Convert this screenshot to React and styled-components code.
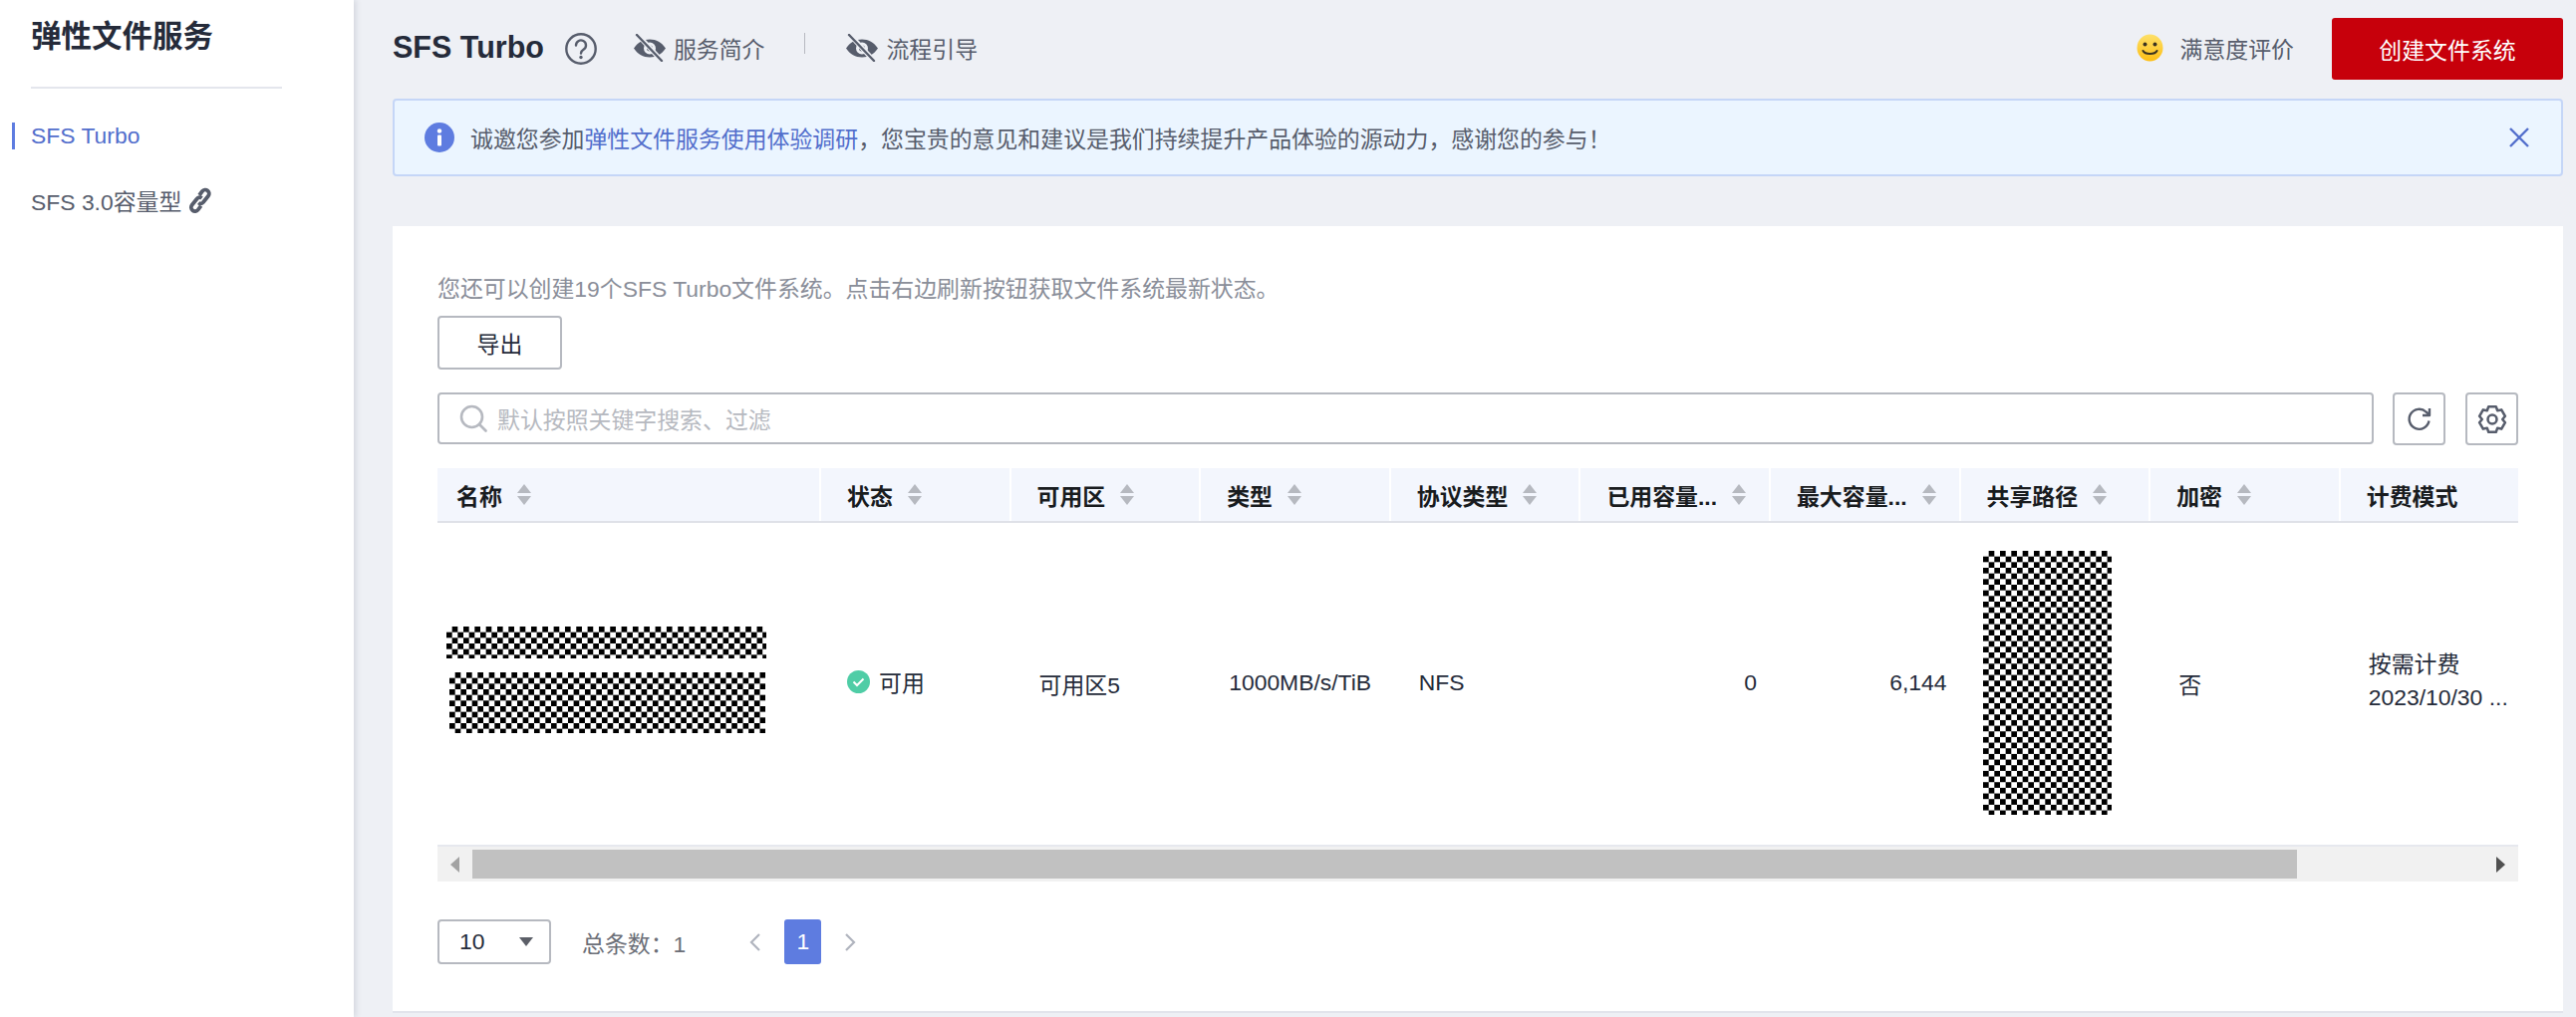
import styled, { createGlobalStyle } from "styled-components";

const GlobalStyle = createGlobalStyle`
  html, body {
    margin: 0;
    padding: 0;
    height: 100%;
    overflow: hidden;
  }
  body {
    font-family: "Liberation Sans", "Noto Sans CJK SC", sans-serif;
    font-size: 22.9px;
    color: #252b3a;
    background: #eef0f5;
  }
  * {
    box-sizing: border-box;
  }
`;

const COLUMNS = "385px repeat(8, 190.6px) 1fr";

const headers = [
  { label: "名称", pad: 19 },
  { label: "状态" },
  { label: "可用区" },
  { label: "类型" },
  { label: "协议类型" },
  { label: "已用容量..." },
  { label: "最大容量..." },
  { label: "共享路径" },
  { label: "加密" },
  { label: "计费模式", noSort: true },
];

const EyeOffIcon = () => (
  <svg width="32" height="28" viewBox="0 0 32 28">
    <path
      fill="#575d6c"
      fillRule="evenodd"
      d="M0 14.5C4 8.500 9.500 5.500 16 5.500s12 3 16 9C28 20.500 22.500 23.500 16 23.500S4 20.500 0 14.500zM16 8.500a6 6 0 1 0 0 12 6 6 0 0 0 0-12z"
    />
    <circle cx="16" cy="14.5" r="3" fill="#575d6c" />
    <path d="M4 1l23 25" stroke="#eef0f5" strokeWidth="5" />
    <path d="M3 1l25 26" stroke="#575d6c" strokeWidth="2.4" strokeLinecap="round" />
  </svg>
);

const HelpIcon = () => (
  <svg width="32" height="32" viewBox="0 0 32 32" fill="none" stroke="#575d6c">
    <circle cx="16" cy="16" r="14.7" strokeWidth="2.4" />
    <path d="M11 12.5a5 5 0 1 1 7.800 4.100c-1.800 1.200-2.800 2-2.800 4" strokeWidth="2.4" strokeLinecap="round" />
    <circle cx="16" cy="24.5" r="1.7" fill="#575d6c" stroke="none" />
  </svg>
);

const LinkIcon = () => (
  <svg width="24" height="26" viewBox="0 0 24 26" fill="none" stroke="#575d6c" strokeWidth="3.8">
    <path d="M11 8l3-4a3.800 3.800 0 0 1 6 4.800L15 15a3.300 3.300 0 0 1-4.800 .6" />
    <path d="M13.500 11a3.300 3.300 0 0 0-4.800 .5l-5 6.300a3.800 3.800 0 0 0 6 4.800l3-4" />
  </svg>
);

const Smiley = () => (
  <svg width="27" height="28" viewBox="0 0 27 28">
    <defs>
      <linearGradient id="smileyFill" x1="0" y1="0" x2="0" y2="1">
        <stop offset="0" stopColor="#fde06a" />
        <stop offset="1" stopColor="#fdbe14" />
      </linearGradient>
    </defs>
    <ellipse cx="13.5" cy="14" rx="13" ry="13.5" fill="url(#smileyFill)" />
    <circle cx="8.5" cy="10.5" r="2" fill="#3a3320" />
    <circle cx="18.5" cy="10.5" r="2" fill="#3a3320" />
    <path d="M6.500 17c2 4 12 4 14 0" fill="none" stroke="#3a3320" strokeWidth="2" strokeLinecap="round" />
  </svg>
);

const InfoIcon = () => (
  <svg width="30" height="30" viewBox="0 0 30 30">
    <circle cx="15" cy="15" r="15" fill="#5e7ce0" />
    <circle cx="15" cy="8.5" r="2.2" fill="#fff" />
    <rect x="13" y="12.5" width="4" height="11" rx="1" fill="#fff" />
  </svg>
);

const CloseIcon = () => (
  <svg width="20" height="20" viewBox="0 0 20 20" fill="none" stroke="#526ecc" strokeWidth="2.4">
    <path d="M1 1l18 18M19 1L1 19" />
  </svg>
);

const SearchIcon = () => (
  <svg width="28" height="28" viewBox="0 0 28 28" fill="none" stroke="#b6b9c0" strokeWidth="2.6">
    <circle cx="12.5" cy="12.5" r="10.5" />
    <path d="M20 20l6.500 6.500" strokeLinecap="round" />
  </svg>
);

const RefreshIcon = () => (
  <svg width="26" height="26" viewBox="0 0 26 26" fill="none" stroke="#575d6c" strokeWidth="2.4">
    <path d="M22.500 14.500A10 10 0 1 1 19.500 5.500L22.500 8" />
    <path d="M23 2v7h-7" strokeLinejoin="round" />
  </svg>
);

const GearIcon = () => (
  <svg width="32" height="32" viewBox="0 0 30 30" fill="none" stroke="#575d6c" strokeWidth="2.4" strokeLinejoin="round">
    <path d="M11.500 3h7l1.300 3.700 3.800-.7 3.500 6-2.500 3 2.500 3-3.500 6-3.800-.7-1.300 3.700h-7l-1.300-3.700-3.800 .7-3.500-6 2.500-3-2.500-3 3.500-6 3.800 .7z" />
    <circle cx="15" cy="15" r="4.2" />
  </svg>
);

const CheckIcon = () => (
  <svg width="23" height="23" viewBox="0 0 23 23">
    <circle cx="11.5" cy="11.5" r="11.5" fill="#4fcda6" />
    <path d="M6.500 11.500l3.500 3.500 6.500-6.500" fill="none" stroke="#fff" strokeWidth="2" />
  </svg>
);

const ChevronIcon = ({ flip }) => (
  <svg width="12" height="18" viewBox="0 0 12 18" fill="none" stroke="#b0b4be" strokeWidth="2.2">
    <path d={flip ? "M2 1l8 8-8 8" : "M10 1L2 9l8 8"} />
  </svg>
);

const Page = styled.div`
  display: flex;
  width: 2585px;
  height: 1021px;
  overflow: hidden;
`;

const Sidebar = styled.aside`
  width: 355px;
  flex: none;
  background: #fff;
  box-shadow: 2px 0 6px rgba(40, 50, 80, 0.14);
  position: relative;
`;

const SideTitle = styled.h1`
  margin: 0 72px 0 31px;
  height: 89px;
  padding-top: 16px;
  font-size: 30.5px;
  line-height: 40px;
  font-weight: 700;
  color: #252b3a;
  border-bottom: 2px solid #e4e6ed;
  white-space: nowrap;
`;

const SideNav = styled.nav`
  display: flex;
  flex-direction: column;
  gap: 37px;
  padding-top: 34px;
`;

const SideItem = styled.a`
  display: flex;
  align-items: center;
  gap: 7px;
  height: 27px;
  margin-left: 12px;
  padding-left: ${({ $active }) => ($active ? "16px" : "19px")};
  border-left: ${({ $active }) => ($active ? "3px solid #5e7ce0" : "none")};
  color: ${({ $active }) => ($active ? "#526ecc" : "#575d6c")};
  white-space: nowrap;
`;

const Main = styled.main`
  flex: 1;
  min-width: 0;
  display: flex;
  flex-direction: column;
  padding: 18px 13px 0 39px;
`;

const TopBar = styled.header`
  display: flex;
  align-items: center;
  height: 62px;
`;

const PageTitle = styled.h2`
  margin: -4px 21px 0 0;
  font-size: 30.5px;
  font-weight: 700;
  color: #252b3a;
  white-space: nowrap;
`;

const TopLink = styled.span`
  display: flex;
  align-items: center;
  gap: 8px;
  margin: -3px 0 0 ${({ $offset }) => $offset}px;
  color: #575d6c;
  white-space: nowrap;
`;

const TopDivider = styled.i`
  width: 1px;
  height: 21px;
  margin: -12px 0 0 40px;
  background: #b6b9c0;
`;

const TopRight = styled.div`
  margin-left: auto;
  display: flex;
  align-items: center;
`;

const Rating = styled.span`
  display: flex;
  align-items: center;
  gap: 17px;
  margin: -2px 38px 0 0;
  color: #575d6c;
  white-space: nowrap;
`;

const CreateButton = styled.button`
  width: 232px;
  height: 62px;
  border: none;
  border-radius: 3px;
  background: #c7000b;
  color: #fff;
  font: inherit;
`;

const Alert = styled.div`
  display: flex;
  align-items: center;
  height: 78px;
  margin-top: 19px;
  padding: 0 32px 0 30px;
  gap: 16px;
  background: #ebf5ff;
  border: 2px solid #c5d6f7;
  border-radius: 4px;
  color: #575d6c;
  white-space: nowrap;
`;

const AlertLink = styled.a`
  color: #526ecc;
`;

const AlertClose = styled.span`
  display: flex;
  margin-left: auto;
`;

const Card = styled.section`
  height: 788px;
  margin-top: 50px;
  padding: 48px 45px 0;
  background: #fff;
  box-shadow: 0 2px 0 #e2e4ec;
`;

const Note = styled.p`
  margin: 0;
  line-height: 30px;
  color: #8a8e99;
  white-space: nowrap;
`;

const OutlineButton = styled.button`
  display: block;
  width: 125px;
  height: 54px;
  margin-top: 12px;
  padding: 0;
  background: #fff;
  border: 2px solid #b6b9c0;
  border-radius: 4px;
  color: #252b3a;
  font: inherit;
`;

const SearchRow = styled.div`
  display: flex;
  margin-top: 23px;
  gap: 19px;
`;

const SearchBox = styled.div`
  flex: 1;
  display: flex;
  align-items: center;
  gap: 10px;
  height: 52px;
  padding-left: 20px;
  border: 2px solid #b6b9c0;
  border-radius: 4px;
  color: #b6b9c0;
`;

const ToolButtons = styled.div`
  display: flex;
  gap: 20px;
`;

const IconButton = styled.button`
  display: flex;
  align-items: center;
  justify-content: center;
  width: 53px;
  height: 53px;
  padding: 0;
  background: #fff;
  border: 2px solid #b6b9c0;
  border-radius: 4px;
`;

const HeadRow = styled.div`
  display: grid;
  grid-template-columns: ${COLUMNS};
  height: 55px;
  margin-top: 23px;
  background: #f3f6fd;
  border-bottom: 2px solid #dfe1e8;
`;

const HeadCell = styled.div`
  display: flex;
  align-items: center;
  min-width: 0;
  padding-left: ${({ $pad }) => $pad}px;
  border-right: 2px solid #fff;
  color: #191c1f;
  font-weight: 700;
  white-space: nowrap;
  &:last-child {
    border-right: none;
  }
`;

const SortMark = styled.span`
  display: flex;
  flex-direction: column;
  gap: 3px;
  margin-left: 15px;
  &::before,
  &::after {
    content: "";
    width: 0;
    height: 0;
    border-left: 7.5px solid transparent;
    border-right: 7.5px solid transparent;
  }
  &::before {
    border-bottom: 9px solid #b6b9c0;
  }
  &::after {
    border-top: 9px solid #b6b9c0;
  }
`;

const DataRow = styled.div`
  display: grid;
  grid-template-columns: ${COLUMNS};
  height: 325px;
  align-items: center;
  padding-bottom: 2px;
  border-bottom: 2px solid #e6e8ee;
`;

const Cell = styled.div`
  min-width: 0;
  padding: ${({ $right }) => ($right ? "0 14px 0 0" : "0 10px 0 28px")};
  text-align: ${({ $right }) => ($right ? "right" : "left")};
  white-space: nowrap;
`;

const NameCell = styled.div`
  display: flex;
  flex-direction: column;
  gap: 14px;
  padding-bottom: 6px;
`;

const Masked = styled.div`
  width: ${({ $w }) => $w}px;
  height: ${({ $h }) => $h}px;
  margin-left: ${({ $x }) => $x}px;
  background: repeating-conic-gradient(#000 0 25%, #fff 0 50%) 0 0 / 11.33px 11.33px;
`;

const StatusCell = styled.div`
  display: flex;
  align-items: center;
  gap: 9px;
  padding: 0 0 3px 26px;
`;

const BillingCell = styled.div`
  padding-left: 28px;
  line-height: 33px;
  padding-bottom: 4px;
  white-space: nowrap;
`;

const ScrollBar = styled.div`
  display: flex;
  align-items: center;
  height: 35px;
  padding: 3px 0;
  background: #f1f1f1;
`;

const ScrollArrow = styled.span`
  flex: none;
  display: flex;
  justify-content: center;
  width: 35px;
  ${({ $left }) => ($left ? "" : "margin-left: auto;")}
  &::before {
    content: "";
    border-top: 8px solid transparent;
    border-bottom: 8px solid transparent;
    ${({ $left }) =>
      $left ? "border-right: 9px solid #a3a3a3;" : "border-left: 9px solid #505050;"}
  }
`;

const ScrollThumb = styled.div`
  width: 1831px;
  height: 29px;
  background: #c1c1c1;
`;

const Pager = styled.div`
  display: flex;
  align-items: center;
  height: 45px;
  margin-top: 38px;
`;

const PageSize = styled.div`
  display: flex;
  align-items: center;
  justify-content: space-between;
  width: 114px;
  height: 45px;
  padding: 0 16px 0 20px;
  border: 2px solid #b6b9c0;
  border-radius: 4px;
  &::after {
    content: "";
    border-left: 7px solid transparent;
    border-right: 7px solid transparent;
    border-top: 9px solid #5c5f68;
  }
`;

const Total = styled.span`
  margin-left: 31px;
  color: #6c6f78;
  white-space: pre;
`;

const PagerNav = styled.span`
  display: flex;
  align-items: center;
  margin-left: 64px;
`;

const PageNumber = styled.span`
  display: flex;
  align-items: center;
  justify-content: center;
  width: 37px;
  height: 45px;
  margin: 0 23px;
  border-radius: 3px;
  background: #5e7ce0;
  color: #fff;
`;

export default function App() {
  return (
    <Page>
      <GlobalStyle />
      <Sidebar>
        <SideTitle>弹性文件服务</SideTitle>
        <SideNav>
          <SideItem $active>SFS Turbo</SideItem>
          <SideItem>
            SFS 3.0容量型
            <LinkIcon />
          </SideItem>
        </SideNav>
      </Sidebar>
      <Main>
        <TopBar>
          <PageTitle>SFS Turbo</PageTitle>
          <HelpIcon />
          <TopLink $offset={37}>
            <EyeOffIcon />
            服务简介
          </TopLink>
          <TopDivider />
          <TopLink $offset={41}>
            <EyeOffIcon />
            流程引导
          </TopLink>
          <TopRight>
            <Rating>
              <Smiley />
              满意度评价
            </Rating>
            <CreateButton>创建文件系统</CreateButton>
          </TopRight>
        </TopBar>
        <Alert>
          <InfoIcon />
          <span>
            诚邀您参加<AlertLink>弹性文件服务使用体验调研</AlertLink>，您宝贵的意见和建议是我们持续提升产品体验的源动力，感谢您的参与！
          </span>
          <AlertClose>
            <CloseIcon />
          </AlertClose>
        </Alert>
        <Card>
          <Note>您还可以创建19个SFS Turbo文件系统。点击右边刷新按钮获取文件系统最新状态。</Note>
          <OutlineButton>导出</OutlineButton>
          <SearchRow>
            <SearchBox>
              <SearchIcon />
              默认按照关键字搜索、过滤
            </SearchBox>
            <ToolButtons>
              <IconButton>
                <RefreshIcon />
              </IconButton>
              <IconButton>
                <GearIcon />
              </IconButton>
            </ToolButtons>
          </SearchRow>
          <HeadRow>
            {headers.map((h) => (
              <HeadCell key={h.label} $pad={h.pad || 26}>
                {h.label}
                {!h.noSort && <SortMark />}
              </HeadCell>
            ))}
          </HeadRow>
          <DataRow>
            <NameCell>
              <Masked $w={321} $h={32} $x={9} />
              <Masked $w={317} $h={61} $x={12} />
            </NameCell>
            <StatusCell>
              <CheckIcon />
              可用
            </StatusCell>
            <Cell>可用区5</Cell>
            <Cell>1000MB/s/TiB</Cell>
            <Cell>NFS</Cell>
            <Cell $right>0</Cell>
            <Cell $right>6,144</Cell>
            <Masked $w={129} $h={265} $x={22} />
            <Cell>否</Cell>
            <BillingCell>
              按需计费
              <br />
              2023/10/30 ...
            </BillingCell>
          </DataRow>
          <ScrollBar>
            <ScrollArrow $left />
            <ScrollThumb />
            <ScrollArrow />
          </ScrollBar>
          <Pager>
            <PageSize>10</PageSize>
            <Total>总条数：1</Total>
            <PagerNav>
              <ChevronIcon />
              <PageNumber>1</PageNumber>
              <ChevronIcon flip />
            </PagerNav>
          </Pager>
        </Card>
      </Main>
    </Page>
  );
}
